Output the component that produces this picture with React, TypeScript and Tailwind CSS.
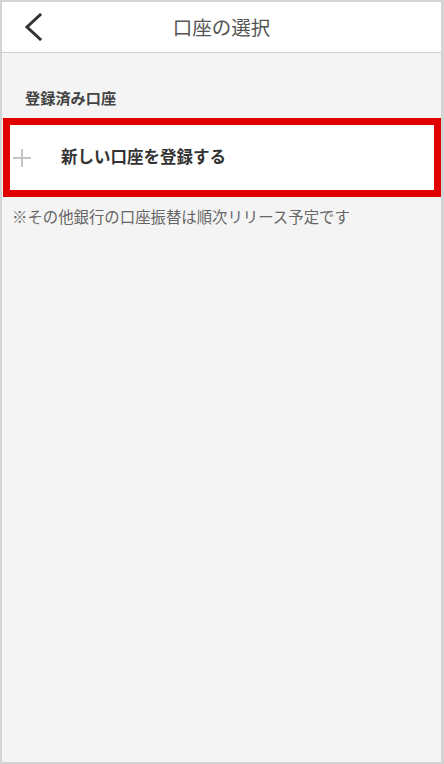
export default function App() {
	return (
		<div
			className="w-[444px] h-[764px] flex flex-col bg-[#f4f4f4] border-t-2 border-l-2 border-b-2 border-r-[3px] border-[#d4d4d4]"
			style={{ fontFamily: '"Noto Sans CJK JP", "Noto Sans", sans-serif' }}
		>
			{/* header */}
			<div className="h-[51px] shrink-0 grid grid-cols-[60px_1fr_60px] items-center bg-white border-b border-[#cfcfcf]">
				<div className="pl-[22px] flex items-center">
					<svg width="20" height="28" viewBox="0 0 20 28" fill="none">
						<polyline points="16,2 3,14 16,26" stroke="#333" strokeWidth="3" strokeLinecap="square" />
					</svg>
				</div>
				<h1 className="text-center text-[19.5px] leading-none text-[#555] -mt-[1px]">口座の選択</h1>
				<div />
			</div>

			{/* registered accounts */}
			<p className="mt-[33px] pl-[23px] text-[15.2px] leading-[22px] font-bold text-[#444]">登録済み口座</p>

			<div className="mt-[10px] ml-[1px] h-[79px] border-[7px] border-[#e10000] bg-white flex items-center">
				<div className="pl-[3px] w-[51px] flex items-center">
					<svg width="18" height="18" viewBox="0 0 18 18">
						<path d="M9 0v18M0 9h18" stroke="#c4c4c4" strokeWidth="2" />
					</svg>
				</div>
				<span className="text-[16.5px] font-bold text-[#333] -mt-[2px]">新しい口座を登録する</span>
			</div>

			<p className="mt-[8px] pl-[10px] text-[15.4px] leading-[22px] text-[#666]">
				※その他銀行の口座振替は順次リリース予定です
			</p>
		</div>
	)
}
